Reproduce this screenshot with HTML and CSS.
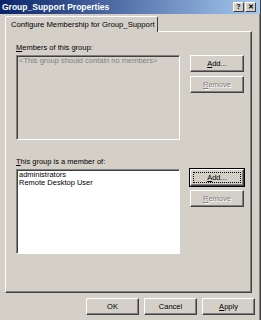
FILE: index.html
```html
<!DOCTYPE html>
<html lang="en">

<head>
    <meta charset="UTF-8">
    <title>Group_Support Properties</title>
    <link rel="stylesheet" href="styles.css">
</head>

<body>
    <div class="window">
        <div class="titlebar">
            <span class="title">Group_Support Properties</span>
            <div class="title-btns">
                <span class="tbtn">?</span>
                <span class="tbtn">&#x2715;</span>
            </div>
        </div>

        <div class="tabs">
            <div class="tab">Configure Membership for Group_Support</div>
        </div>

        <div class="panel">
            <div class="label"><u>M</u>embers of this group:</div>
            <div class="row">
                <div class="list disabled">
                    <div class="item">&lt;This group should contain no members&gt;</div>
                </div>
                <div class="side">
                    <button class="btn"><u>A</u>dd...</button>
                    <button class="btn" disabled><u>R</u>emove</button>
                </div>
            </div>

            <div class="label second"><u>T</u>his group is a member of:</div>
            <div class="row">
                <div class="list">
                    <div class="item">administrators</div>
                    <div class="item">Remote Desktop User</div>
                </div>
                <div class="side">
                    <button class="btn focus"><span class="focus-ring"><u>A</u>dd...</span></button>
                    <button class="btn" disabled><u>R</u>emove</button>
                </div>
            </div>
        </div>

        <div class="footer">
            <button class="btn wide">OK</button>
            <button class="btn wide">Cancel</button>
            <button class="btn wide"><u>A</u>pply</button>
        </div>
    </div>
</body>

</html>
```

FILE: styles.css
```css
* {
    margin: 0;
    padding: 0;
    box-sizing: border-box;
}

body {
    font-family: "Liberation Sans", Arial, sans-serif;
    font-size: 7.5px;
    background: #d4d0c8;
    color: #000;
}

.window {
    width: 261px;
    height: 320px;
    background: #d4d0c8;
    border-right: 1px solid #404040;
    box-shadow: inset -1px 0 0 #808080;
}

.titlebar {
    height: 14px;
    background: linear-gradient(to right, #0a246a, #a6caf0);
    display: flex;
    align-items: center;
    justify-content: space-between;
    padding: 0 4px 0 2px;
}

.title {
    color: #fff;
    font-weight: bold;
    font-size: 8.5px;
}

.title-btns {
    display: flex;
    gap: 1px;
}

.tbtn {
    width: 11px;
    height: 10px;
    background: #d4d0c8;
    border: 1px solid;
    border-color: #fff #404040 #404040 #fff;
    font-size: 7px;
    font-weight: bold;
    line-height: 8px;
    text-align: center;
}

.tabs {
    padding: 2px 0 0 5px;
    display: flex;
}

/* tab sits over the panel's top edge so they join */
.tab {
    position: relative;
    z-index: 1;
    height: 16px;
    width: 153px;
    margin-bottom: -1px;
    background: #d4d0c8;
    border: 1px solid;
    border-bottom: none;
    border-color: #fff #404040 transparent #fff;
    border-radius: 2px 2px 0 0;
    padding: 3px 0 0 5px;
    line-height: 9px;
    font-size: 7.7px;
    white-space: nowrap;
}

.panel {
    width: 247px;
    height: 262px;
    margin-left: 5px;
    border: 1px solid;
    border-color: #fff #404040 #404040 #fff;
    box-shadow: inset -1px -1px 0 #808080;
    padding: 11px 0 0 10px;
}

.label {
    line-height: 9px;
    height: 12px;
}

.label.second {
    margin-top: 17px;
}

.row {
    display: flex;
    gap: 10px;
}

.list {
    width: 164px;
    height: 85px;
    background: #fff;
    border: 1px solid;
    border-color: #808080 #fff #fff #808080;
    box-shadow: inset 1px 1px 0 #404040;
    padding: 1px 2px;
}

.list.disabled {
    background: #d4d0c8;
    color: #808080;
}

.item {
    line-height: 8px;
}

.side {
    display: flex;
    flex-direction: column;
    gap: 4px;
}

.btn {
    width: 54px;
    height: 17px;
    background: #d4d0c8;
    border: 1px solid;
    border-color: #fff #404040 #404040 #fff;
    box-shadow: inset -1px -1px 0 #808080;
    font-family: inherit;
    font-size: 7.5px;
    color: #000;
    display: flex;
    align-items: center;
    justify-content: center;
}

.btn:disabled {
    color: #808080;
    text-shadow: 1px 1px 0 #fff;
}

.btn.focus {
    outline: 1px solid #000;
    padding: 2px;
}

.focus-ring {
    display: flex;
    align-items: center;
    justify-content: center;
    width: 100%;
    height: 100%;
    border: 1px dotted #000;
}

.footer {
    display: flex;
    justify-content: flex-end;
    gap: 5px;
    padding: 5px 5px 0 0;
}

.btn.wide {
    width: 53px;
}
```
